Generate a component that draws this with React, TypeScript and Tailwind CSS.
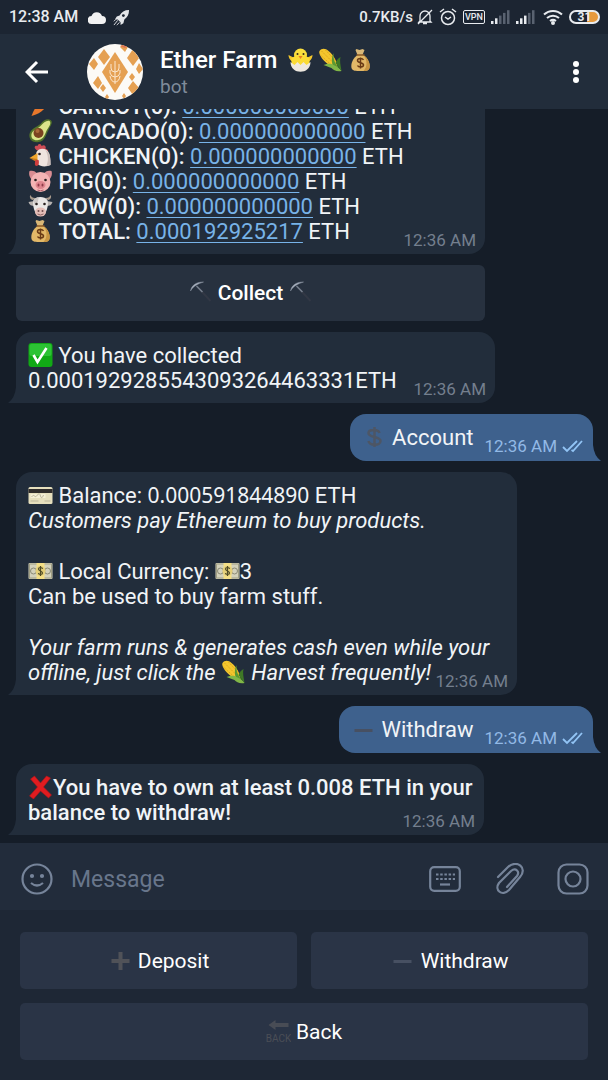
import type { ReactNode } from 'react';
import { clsx } from 'clsx';

type IconName =
  | 'carrot' | 'avocado' | 'chicken' | 'pig' | 'cow' | 'moneybag' | 'pickaxe' | 'check' | 'dollar'
  | 'card' | 'cash' | 'corn' | 'minus' | 'plus' | 'cross' | 'back' | 'chick';

const EMOJI: Record<IconName, ReactNode> = {
  carrot: (
    <>
      <path d="M3 22C6 14 10 8 15 6l4 4c-2 5-8 10-16 12z" fill="#e8772b" />
      <path d="M15 6l2-5 2 4 4-1-2 4 2 2-4 0z" fill="#5a9a32" />
    </>
  ),
  avocado: (
    <>
      <path d="M22 1c-3-2-7 0-10 4C8 8 2 10 1 15c-1 6 4 9 9 8 7-1 7-7 10-12 2-4 5-8 2-10z" fill="#53742a" />
      <path d="M21 2c-3-1-6 2-9 5-3 3-8 4-9 8-1 5 3 7 7 6 6-1 6-6 9-11 2-3 4-6 2-8z" fill="#dce58a" />
      <circle cx="10" cy="14" r="5" fill="#7b4320" />
      <circle cx="9" cy="12" r="2" fill="#aa6b3a" />
    </>
  ),
  chicken: (
    <>
      <path d="M8 6C5 4 6 1 9 2c1-3 4-2 4 0 3-2 5 0 4 3 3 0 3 3 1 4z" fill="#cf4c55" />
      <path d="M8 8c3-5 11-4 13 2 1 4 1 8 1 11-4 2-10 2-13-1l-2-6z" fill="#efe4df" />
      <path d="M17 6c5 3 5 9 5 15l-4 1c2-5 2-11-1-16z" fill="#cdbfbb" />
      <path d="M9 9l-8 5 8 2z" fill="#f0a62c" />
      <path d="M1 14l7 4 1-3z" fill="#c97b1c" />
      <path d="M7 16c-1 3-1 6 1 6s3-3 2-6z" fill="#cf3d3d" />
      <circle cx="11" cy="10" r="1.3" fill="#2b2020" />
    </>
  ),
  pig: (
    <>
      <path d="M1 2c3-1 6 0 8 3l-5 6C1 9 0 5 1 2zM23 2c-3-1-6 0-8 3l5 6c3-2 4-6 3-9z" fill="#d98d92" />
      <ellipse cx="12" cy="13" rx="10" ry="10" fill="#f3b4b4" />
      <ellipse cx="12" cy="16" rx="5" ry="4" fill="#df858e" />
      <ellipse cx="10" cy="16" rx="1" ry="1.6" fill="#8c3c48" />
      <ellipse cx="14" cy="16" rx="1" ry="1.6" fill="#8c3c48" />
      <circle cx="7" cy="11" r="1.3" fill="#2b2020" />
      <circle cx="17" cy="11" r="1.3" fill="#2b2020" />
      <path d="M9 21q3 1.5 6 0" stroke="#b0606a" fill="none" />
    </>
  ),
  cow: (
    <>
      <path d="M4 6C1 5 1 2 2 1c1 3 4 3 6 3zM20 6c3-1 3-4 2-5-1 3-4 3-6 3z" fill="#a99b8d" />
      <path d="M6 7L0 8c1 3 3 4 6 4zM18 7l6 1c-1 3-3 4-6 4z" fill="#b7b3b1" />
      <path d="M5 6c3-4 11-4 14 0 1 4 0 9-2 13-2 4-8 4-10 0C5 15 4 10 5 6z" fill="#e9e7e6" />
      <path d="M5 6c2-2 4-3 5-3 0 4-1 7-4 8z" fill="#cac6c4" />
      <ellipse cx="12" cy="18" rx="5.5" ry="4.5" fill="#e3bcb6" />
      <circle cx="10" cy="17" r="1" fill="#714e4e" />
      <circle cx="14" cy="17" r="1" fill="#714e4e" />
      <circle cx="8" cy="10" r="1.3" fill="#28211f" />
      <circle cx="16" cy="10" r="1.3" fill="#28211f" />
      <path d="M9 20q3 2 6 0" stroke="#8d6464" fill="none" />
    </>
  ),
  moneybag: (
    <>
      <path d="M8 1l3 1 3-1 2 1-2 5h-5L7 2z" fill="#d9b777" />
      <path d="M9 7h6c4 3 7 8 6 13-1 3-4 3-9 3s-8 0-9-3C2 15 5 10 9 7z" fill="#e2b868" />
      <path d="M15 7c4 3 7 8 6 13-1 3-3 3-6 3 4-4 4-11 0-16z" fill="#c89543" />
      <path d="M8 7h8" stroke="#8b5a26" strokeWidth="1.5" />
      <path d="M15 12c-1-2-6-2-6 .5 0 3 6 1.5 6 4.5 0 2.5-5 2.5-6 .5M12 9.500v11" stroke="#6a3b16" strokeWidth="1.5" fill="none" />
    </>
  ),
  pickaxe: (
    <>
      <path d="M9 7l13 14" stroke="#323845" strokeWidth="2" />
      <path d="M8 6l6 6" stroke="#77808e" strokeWidth="1.5" />
      <path d="M2 11C3 5 8 2 15 2 9 4 5 6 2 11z" fill="#a9b1bf" stroke="#8992a1" strokeWidth=".5" />
    </>
  ),
  check: (
    <>
      <rect width="24" height="24" rx="3" fill="#11a915" />
      <rect x="1" y="1" width="22" height="12" rx="2" fill="#2cc334" />
      <path d="M5 12l4 7L18 5" stroke="#fff" strokeWidth="2.6" fill="none" />
    </>
  ),
  dollar: (
    <path d="M17 8c-1-4-11-4-11 0 0 5 12 3 12 8s-11 5-12 0M12 2v20" stroke="#4d5665" strokeWidth="2.5" fill="none" />
  ),
  card: (
    <>
      <rect y="4" width="24" height="17" rx="1.5" fill="#e6dfbd" />
      <rect y="6" width="24" height="4" fill="#302d2b" />
      <rect x="2" y="11" width="15" height="4" fill="#f5efd5" />
      <path d="M3 14q2-3 3-1t3-1 3 1 3-1M2 18h8M16 18h6" stroke="#bbb59a" fill="none" />
    </>
  ),
  cash: (
    <>
      <rect y="4" width="24" height="16" rx="1" fill="#d3d1bb" />
      <rect x="1" y="5" width="22" height="14" fill="none" stroke="#a19f83" />
      <circle cx="5" cy="12" r="3" fill="none" stroke="#8b8a76" />
      <circle cx="19" cy="12" r="3" fill="none" stroke="#8b8a76" />
      <rect x="8" y="4" width="8" height="16" fill="#f3de86" />
      <circle cx="12" cy="12" r="5" fill="#e4cf78" />
      <path d="M14 10c0-2-4-2-4 0s4 2 4 4-4 2-4 0M12 7v10" stroke="#4e4a25" strokeWidth="1.2" fill="none" />
    </>
  ),
  corn: (
    <>
      <path d="M1 3C3 0 7 0 10 3c5 4 8 9 9 16-6 0-11-3-15-8C2 8 0 5 1 3z" fill="#f3c62d" />
      <path d="M3 3l14 14M7 2l11 12M2 7l12 11" stroke="#d69b18" strokeWidth=".8" strokeDasharray="1.5 1" />
      <path d="M15 5c0 4 0 6 1 8 1 4 4 5 6 10-4 0-7-2-8-6s-1-8 1-12z" fill="#5a9932" />
      <path d="M5 17c4-1 7-2 10 0 4 2 6 3 8 6-5 1-8-1-10-3-3-1-5-2-8-3z" fill="#81b747" />
      <path d="M17 15c1-3 3-5 5-6-1 4 0 8 1 14z" fill="#3f7926" />
    </>
  ),
  minus: <rect x="3" y="12" width="18" height="3" fill="#475062" />,
  plus: <path d="M12 4v18M3 13h18" stroke="#505258" strokeWidth="4" />,
  cross: (
    <path d="M2 4l4-3 6 7 6-7 4 2-7 9 8 8-3 3-8-7-7 8-4-3 8-9z" fill="#e01c20" stroke="#ae1519" strokeWidth=".6" />
  ),
  back: (
    <>
      <path d="M2 6l7-5v3h13v4H9v3z" fill="#484c55" />
      <text x="12" y="23" textAnchor="middle" fontSize="10" fontFamily="Roboto, sans-serif" fill="#4b4e56">BACK</text>
    </>
  ),
  chick: (
    <>
      <circle cx="12" cy="7" r="6.5" fill="#fbdf3c" />
      <path d="M4 14C1 12 0 9 0 7l6 3zM20 14c3-2 4-5 4-7l-6 3z" fill="#f3c72b" />
      <path d="M3 10q9-6 18 0v7H3z" fill="#fbdb35" />
      <path d="M2 14l4 3 3-3 3 3 3-3 3 3 4-3c0 13-20 13-20 0z" fill="#eee8df" />
      <path d="M10 8h4l-2 3z" fill="#e77d23" />
      <circle cx="9" cy="6" r="1" fill="#3a2a18" />
      <circle cx="15" cy="6" r="1" fill="#3a2a18" />
    </>
  ),
};

function Emoji({ name }: { name: IconName }) {
  return (
    <svg viewBox="0 0 24 24" aria-hidden="true" className="inline-block h-6 w-[25px] shrink-0 align-[-4px]">
      {EMOJI[name]}
    </svg>
  );
}

const PRODUCTS: { icon: IconName; label: string; amount: string }[] = [
  { icon: 'carrot', label: 'CARROT(0):', amount: '0.000000000000' },
  { icon: 'avocado', label: 'AVOCADO(0):', amount: '0.000000000000' },
  { icon: 'chicken', label: 'CHICKEN(0):', amount: '0.000000000000' },
  { icon: 'pig', label: 'PIG(0):', amount: '0.000000000000' },
  { icon: 'cow', label: 'COW(0):', amount: '0.000000000000' },
  { icon: 'moneybag', label: 'TOTAL:', amount: '0.000192925217' },
];

function Time() {
  return <time className="float-right mt-3 -mb-2 text-[17px] leading-[18px] font-normal not-italic text-[#747f8e]">12:36 AM</time>;
}

function Incoming({ className, children }: { className: string; children: ReactNode }) {
  return (
    <div className={clsx('relative ml-4 max-w-[95%] shrink-0 rounded-2xl rounded-bl-none bg-[#222d3b] pt-[11px] pr-[9px] pb-[10px] pl-3', className)}>
      {children}
      <svg viewBox="0 0 8 16" className="absolute bottom-0 -left-2 h-4 w-2" aria-hidden="true">
        <path d="M8 0Q7 11 0 16H8z" fill="#222d3b" />
      </svg>
    </div>
  );
}

function Outgoing({ icon, text }: { icon: IconName; text: string }) {
  return (
    <div className="relative mr-[15px] flex h-[47px] shrink-0 items-center self-end rounded-2xl rounded-br-none bg-[#3e618d] pr-[10px] pl-3">
      <span>
        <Emoji name={icon} /> {text}
      </span>
      <time className="mt-4 ml-[11px] text-[17px] leading-[18px] text-[#92b9e6]">12:36 AM</time>
      <svg viewBox="0 0 21 14" className="mt-4 ml-[5px] h-[14px] w-[21px]" fill="none" stroke="#92c4f5" strokeWidth="1.8" aria-label="Read">
        <path d="M1 8l4 4L15 2M9.500 11l1.500 1L20 2" />
      </svg>
      <svg viewBox="0 0 8 16" className="absolute -right-2 bottom-0 h-4 w-2" aria-hidden="true">
        <path d="M0 0Q1 11 8 16H0z" fill="#3e618d" />
      </svg>
    </div>
  );
}

function Signal({ bars }: { bars: number }) {
  return (
    <svg viewBox="0 0 20 14" className="h-[14px] w-5" aria-hidden="true">
      {[0, 1, 2, 3, 4].map((i) => (
        <rect key={i} x={i * 4} y={11 - i * 2.7} width="2.5" height={3 + i * 2.7} fill={i < bars ? '#e8ebef' : '#596270'} />
      ))}
    </svg>
  );
}

function StatusBar() {
  return (
    <div className="flex h-[34px] shrink-0 items-center bg-[#1c2532] pr-2 pl-[9px] text-[16px] font-medium text-[#e8ebef]">
      <span>12:38 AM</span>
      <svg viewBox="0 0 18 13" className="ml-[10px] h-[13px] w-[18px]" aria-hidden="true">
        <path d="M4 13a4 4 0 01-.5-8A5.500 5.500 0 0114 5a4 4 0 010 8z" fill="#f2f2f2" />
      </svg>
      <svg viewBox="0 0 18 18" className="ml-[7px] size-[17px]" aria-hidden="true">
        <path d="M17 1c-5 0-8 2-10 6L4 8l-2 3 3 0 3 3v3l3-2 1-4c3-2 5-5 5-10z" fill="#e4e6e9" />
        <path d="M5 12l-4 5M7 14l-3 3M3 11l-2 2" stroke="#e4e6e9" />
        <circle cx="11" cy="7" r="1.5" fill="#1c2532" />
      </svg>
      <span className="ml-auto text-[15px]">0.7KB/s</span>
      <svg viewBox="0 0 16 16" className="ml-1 size-4" fill="none" stroke="currentColor" strokeWidth="1.3" aria-hidden="true">
        <path d="M3 12V7a5 5 0 0110 0v5l1 1H2zM6 14.500h4M15 1L1 15" />
      </svg>
      <svg viewBox="0 0 18 18" className="ml-[6px] size-[18px]" fill="none" stroke="currentColor" strokeWidth="1.5" aria-hidden="true">
        <circle cx="9" cy="10" r="6.5" />
        <path d="M1 4l4-3M17 4l-4-3M6 9l3 2 3-2" />
      </svg>
      <span className="ml-[6px] flex h-[14px] w-[22px] items-center justify-center rounded-xs border border-current text-[9px] leading-none">VPN</span>
      <span className="ml-[6px] flex items-center gap-[5px]">
        <Signal bars={2} />
        <Signal bars={3} />
      </span>
      <svg viewBox="0 0 20 16" className="ml-[7px] h-4 w-5" fill="none" stroke="currentColor" strokeWidth="2" aria-hidden="true">
        <path d="M1 5.500a13 13 0 0118 0M4 9a9 9 0 0112 0M7 12a5 5 0 016 0" />
        <circle cx="10" cy="14" r="1" fill="currentColor" />
      </svg>
      <span className="ml-[6px] flex h-[14px] w-[31px] items-center justify-center rounded-full border-2 border-current bg-linear-to-r from-transparent from-60% to-[#e79a3e] to-60% text-[12px] leading-none font-bold">
        31
      </span>
    </div>
  );
}

function Header() {
  return (
    <header className="flex h-[75px] shrink-0 items-center bg-[#222d3b] pr-[22px] pl-[25px]">
      <button aria-label="Back" className="text-white">
        <svg viewBox="0 0 24 24" className="size-6" fill="none" stroke="currentColor" strokeWidth="3">
          <path d="M23 12H3M12 2L2 12l10 10" />
        </svg>
      </button>
      <svg viewBox="0 0 56 56" className="ml-[38px] size-14 overflow-hidden rounded-full bg-[#fcfaf6]" aria-hidden="true">
        <g fill="#e5a052">
          <path d="M17 5l6 8-6 8-6-8zM46 5l6 9-6 8-6-8zM7 14l4 6-4 6-5-6zM52 19l4 6-4 5-3-5zM11 32l4 7-4 6-5-6zM46 37l6 7-6 7-5-7zM36 0l5 3-3 5-5-5zM45 29l3 4-3 4-3-4zM16 40l3 4-3 4-3-4zM20 50l2 3-2 3-2-3zM37 49l2 3-2 3-2-3z" />
          <path d="M28 8l13 20-13 21-13-21z" />
        </g>
        <g fill="none" stroke="#fbe6cd" strokeWidth="1">
          <path d="M28 17v23M24 20v4q0 4 4 4 4 0 4-4v-4M23 26v3q1 4 5 4 4 0 5-4v-3M23 32q1 6 5 6t5-6" />
        </g>
        <path d="M33 2l5 2 3-2-3-2z" fill="#df7453" />
      </svg>
      <div className="ml-[17px] flex-1 pt-[2px]">
        <h1 className="flex items-center gap-[5px] text-[24px] leading-[28px] font-medium text-white">
          <span className="mr-[6px]">Ether Farm</span>
          <Emoji name="chick" />
          <Emoji name="corn" />
          <Emoji name="moneybag" />
        </h1>
        <p className="text-[19px] leading-[26px] text-[#7f8b9a]">bot</p>
      </div>
      <button aria-label="Menu" className="flex w-5 flex-col items-center gap-[2px]">
        <span className="size-[6px] rounded-full bg-white" />
        <span className="size-[6px] rounded-full bg-white" />
        <span className="size-[6px] rounded-full bg-white" />
      </button>
    </header>
  );
}

function Composer() {
  return (
    <div className="flex h-[67px] shrink-0 items-center bg-[#222c3b] pt-1 pr-[19px] pl-[21px] text-[#76849a]">
      <button aria-label="Emoji">
        <svg viewBox="0 0 32 32" className="size-8" fill="none" stroke="currentColor" strokeWidth="2.2">
          <circle cx="16" cy="16" r="14.5" />
          <path d="M10 20q6 5 12 0" />
          <circle cx="11" cy="13" r="1" fill="currentColor" />
          <circle cx="21" cy="13" r="1" fill="currentColor" />
        </svg>
      </button>
      <input
        aria-label="Message"
        placeholder="Message"
        className="ml-[18px] min-w-0 flex-1 bg-transparent pt-1 text-[23px] text-white outline-none placeholder:text-[#68768b]"
      />
      <button aria-label="Bot keyboard">
        <svg viewBox="0 0 32 26" className="h-[26px] w-8" fill="none" stroke="currentColor" strokeWidth="2.2">
          <rect x="1.2" y="1.2" width="29.6" height="23.6" rx="4" />
          <path d="M7 8.500h19M7 13h19" strokeDasharray="2.5 1.7" />
          <path d="M11 18.500h10" />
        </svg>
      </button>
      <button aria-label="Attach" className="ml-[34px]">
        <svg viewBox="0 0 30 32" className="h-8 w-[30px]" fill="none" stroke="currentColor" strokeWidth="2.2" strokeLinecap="round">
          <path d="M3 14L13 4c9-8 20 1 12 10L14 27C7 34-1 27 4 20L16 8c5-4 9 1 6 5L12 24" />
        </svg>
      </button>
      <button aria-label="Camera" className="ml-8">
        <svg viewBox="0 0 32 32" className="size-8" fill="none" stroke="currentColor" strokeWidth="2.2">
          <rect x="1.5" y="1.5" width="29" height="29" rx="8" />
          <circle cx="16" cy="16" r="7.5" />
        </svg>
      </button>
    </div>
  );
}

function KeyboardButton({ icon, label, className }: { icon: IconName; label: string; className?: string }) {
  return (
    <button className={clsx('h-[57px] rounded-[5px] bg-[#2a3446] pt-[2px] text-[21px] text-white', className)}>
      <Emoji name={icon} /> {label}
    </button>
  );
}

export default function App() {
  return (
    <div className="flex h-screen w-full flex-col overflow-hidden bg-[#151d28] font-['Roboto',sans-serif]">
      <StatusBar />
      <Header />

      <main className="flex min-h-0 flex-1 flex-col items-start justify-end gap-[11px] overflow-hidden pb-2 text-[22px] leading-[25px] text-[#f1f4f7]">
        <Incoming className="w-[469px]">
          {PRODUCTS.map((product, i) => (
            <div key={product.label}>
              {i === PRODUCTS.length - 1 && <Time />}
              <Emoji name={product.icon} /> <b className="font-medium">{product.label}</b>{' '}
              <a href="#" className="text-[#78b3e8] underline decoration-1 underline-offset-[3px]">{product.amount}</a> ETH
            </div>
          ))}
        </Incoming>

        <button className="ml-4 h-14 w-[469px] max-w-[95%] shrink-0 rounded-md bg-[#27313f] text-[21px] font-medium text-white">
          <Emoji name="pickaxe" /> Collect <Emoji name="pickaxe" />
        </button>

        <Incoming className="w-[479px]">
          <p><Emoji name="check" /> You have collected</p>
          <p>
            <Time />
            0.0001929285543093264463331ETH
          </p>
        </Incoming>

        <Outgoing icon="dollar" text="Account" />

        <Incoming className="flex w-[501px] flex-col gap-[26px]">
          <div>
            <p>
              <Emoji name="card" /> Balance: <span className="font-['Noto_Sans',sans-serif] text-[21px] leading-none">0.000591844890</span> ETH
            </p>
            <p className="italic">Customers pay Ethereum to buy products.</p>
          </div>
          <div>
            <p><Emoji name="cash" /> Local Currency: <Emoji name="cash" />3</p>
            <p>Can be used to buy farm stuff.</p>
          </div>
          <p className="italic">
            Your farm runs &amp; generates cash even while your offline, just click the <Emoji name="corn" /> Harvest frequently!
            <Time />
          </p>
        </Incoming>

        <Outgoing icon="minus" text="Withdraw" />

        <Incoming className="w-[468px]">
          <p className="font-medium">
            <Emoji name="cross" />You have to own at least 0.008 ETH in your balance to withdraw!
            <Time />
          </p>
        </Incoming>
      </main>

      <Composer />

      <div className="grid shrink-0 grid-cols-2 gap-[14px] bg-[#1e2735] px-5 pt-[22px] pb-5">
        <KeyboardButton icon="plus" label="Deposit" />
        <KeyboardButton icon="minus" label="Withdraw" />
        <KeyboardButton icon="back" label="Back" className="col-span-2" />
      </div>
    </div>
  );
}
